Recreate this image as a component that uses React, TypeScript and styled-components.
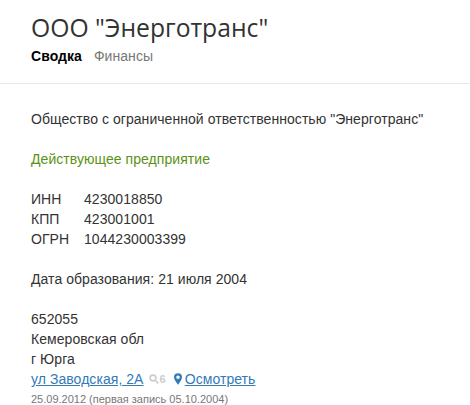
import styled, { createGlobalStyle } from 'styled-components'

const GlobalStyle = createGlobalStyle`
  html, body {
    margin: 0;
    background: #fff;
    color: #333;
    font-family: "Liberation Sans", Arial, sans-serif;
    font-size: 14px;
    line-height: 20px;
    letter-spacing: 0.055px;
  }
`

const Header = styled.header`
  height: 84px;
  box-sizing: border-box;
  padding: 12px 31px 0;
  border-bottom: 1px solid #e7e7e7;
`

const Title = styled.h1`
  margin: 0;
  font-family: "Open Sans", sans-serif;
  font-size: 24.7px;
  font-weight: 400;
  line-height: 32px;
  letter-spacing: 0;
`

const Tabs = styled.nav`
  display: flex;
  gap: 12px;
  margin-top: 2px;
`

const Tab = styled.a<{ $active?: boolean }>`
  color: ${(props) => (props.$active ? '#000' : '#777')};
  font-weight: ${(props) => (props.$active ? 700 : 400)};
`

const Main = styled.main`
  padding: 25px 31px 0;
`

const Block = styled.div`
  margin-bottom: 20px;
`

const Status = styled(Block)`
  color: #5a9216;
`

const CodeRow = styled.div`
  display: flex;
`

const CodeLabel = styled.span`
  width: 53px;
`

const Line = styled.div`
  display: flex;
  align-items: center;
`

const Link = styled.a`
  color: #337ab7;
  text-decoration: underline;
`

const Count = styled.span`
  display: inline-flex;
  align-items: center;
  gap: 1px;
  margin: 0 8px 0 5px;
  color: #ccc;
  font-size: 11px;
  font-weight: 700;
`

const Pin = styled.svg`
  width: 8px;
  height: 12px;
  margin-right: 3px;
  fill: #337ab7;
`

const Note = styled.div`
  color: #777;
  font-size: 11px;
  line-height: 20px;
  letter-spacing: 0;
`

export default function App() {
  return (
    <>
      <GlobalStyle />
      <Header>
        <Title>ООО "Энерготранс"</Title>
        <Tabs>
          <Tab $active>Сводка</Tab>
          <Tab>Финансы</Tab>
        </Tabs>
      </Header>
      <Main>
        <Block>Общество с ограниченной ответственностью "Энерготранс"</Block>
        <Status>Действующее предприятие</Status>
        <Block>
          <CodeRow><CodeLabel>ИНН</CodeLabel>4230018850</CodeRow>
          <CodeRow><CodeLabel>КПП</CodeLabel>423001001</CodeRow>
          <CodeRow><CodeLabel>ОГРН</CodeLabel>1044230003399</CodeRow>
        </Block>
        <Block>Дата образования: 21 июля 2004</Block>
        <div>652055</div>
        <div>Кемеровская обл</div>
        <div>г Юрга</div>
        <Line>
          <Link>ул Заводская, 2А</Link>
          <Count>
            <svg width="10" height="10" viewBox="0 0 10 10" fill="none" stroke="#ccc" strokeWidth="1.6">
              <circle cx="4" cy="4" r="2.9" />
              <path d="M6.2 6.2 9.4 9.4" />
            </svg>
            6
          </Count>
          <Pin viewBox="0 0 9 13">
            <path fillRule="evenodd" d="M4.5 0A4.5 4.5 0 0 0 0 4.5C0 7.5 4.5 13 4.5 13S9 7.500 9 4.500A4.500 4.500 0 0 0 4.500 0ZM4.500 2.500a2 2 0 1 1 0 4 2 2 0 0 1 0-4Z" />
          </Pin>
          <Link>Осмотреть</Link>
        </Line>
        <Note>25.09.2012 (первая запись 05.10.2004)</Note>
      </Main>
    </>
  )
}
